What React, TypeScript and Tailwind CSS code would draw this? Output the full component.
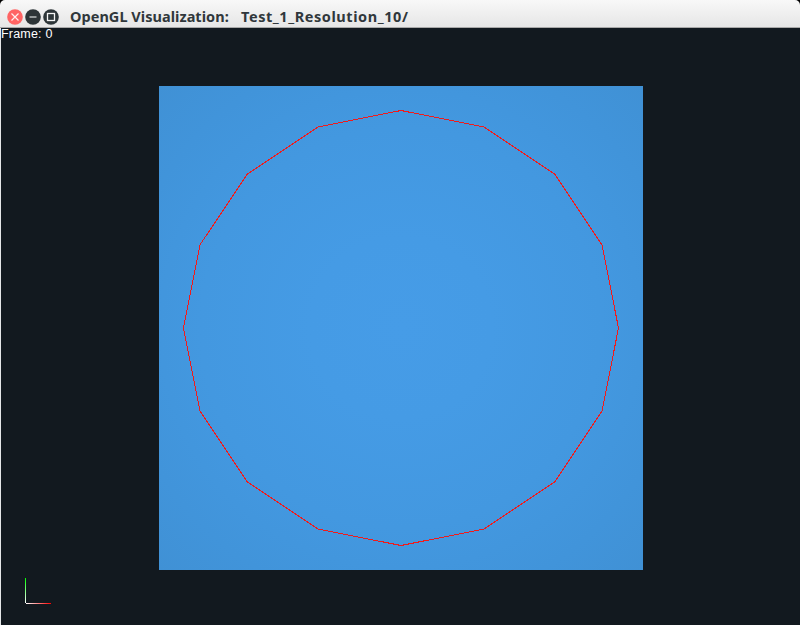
import React from "react";

const CENTER = 242;
const RADIUS = 217.5;
const SIDES = 16;

const outline = Array.from({ length: SIDES }, (_, i) => {
  const a = (i * 2 * Math.PI) / SIDES;
  return `${(CENTER + RADIUS * Math.sin(a)).toFixed(2)},${(CENTER - RADIUS * Math.cos(a)).toFixed(2)}`;
}).join(" ");

function WindowButtons() {
  return (
    <svg className="ml-1.5 h-[18px] w-[54px] shrink-0" viewBox="0 0 54 18" fill="none">
      <circle cx="9" cy="9" r="7.8" fill="#ff6464" />
      <path d="M5.5 5.5l7 7M12.5 5.5l-7 7" stroke="#fff0ef" strokeWidth="1.2" />
      <circle cx="27" cy="9" r="7.8" fill="#2d3538" />
      <path d="M23.5 9h7" stroke="#b9bcbd" strokeWidth="1.5" />
      <circle cx="45" cy="9" r="7.8" fill="#2d3538" />
      <rect x="41.5" y="5.5" width="7" height="7" stroke="#f5f5f5" strokeWidth="1.3" />
    </svg>
  );
}

function TitleBar() {
  return (
    <header className="flex h-7 items-start rounded-t-[5px] border-b border-[#a9a9a9] bg-linear-to-b from-[#f8f8f8] to-[#e6e6e6] pt-2">
      <WindowButtons />
      <h1 className="ml-2.5 flex whitespace-nowrap font-['Noto_Sans',sans-serif] text-[14.5px] leading-4 font-bold text-[#30373b]">
        <span className="w-[171px] tracking-[0.04px]">OpenGL Visualization:</span>
        <span className="tracking-[0.56px]">Test_1_Resolution_10/</span>
      </h1>
    </header>
  );
}

function Viewport() {
  return (
    <main className="flex h-[597px] flex-col border-l border-[#e5e7e8] bg-[#12191f]">
      <p className="h-[58px] font-['Liberation_Sans',sans-serif] text-[12.5px] leading-[13px] tracking-[0.2px] text-white">
        Frame: 0
      </p>
      <svg
        className="ml-[158px] size-[484px] shrink-0 bg-[radial-gradient(circle_at_center,#469ce7_0px,#459be5_90px,#4398e0_200px,#4194da_280px,#4091d5_342px)]"
        viewBox="0 0 484 484"
      >
        <polygon points={outline} fill="none" stroke="#f01b1b" strokeWidth="1" shapeRendering="crispEdges" />
      </svg>
      <svg className="mt-2 ml-6 h-[26px] w-[26px] shrink-0" viewBox="0 0 26 26" shapeRendering="crispEdges">
        <defs>
          <linearGradient id="yAxis" x1="0" y1="1" x2="0" y2="0">
            <stop stopColor="#fff" />
            <stop offset="1" stopColor="#00ff00" />
          </linearGradient>
          <linearGradient id="xAxis">
            <stop stopColor="#fff" />
            <stop offset="1" stopColor="#ff0000" />
          </linearGradient>
        </defs>
        <rect x="0" y="0" width="1" height="25" fill="url(#yAxis)" />
        <rect x="1" y="25" width="25" height="1" fill="url(#xAxis)" />
      </svg>
    </main>
  );
}

export default function App() {
  return (
    <div className="h-[625px] w-[800px] overflow-hidden bg-black">
      <TitleBar />
      <Viewport />
    </div>
  );
}
